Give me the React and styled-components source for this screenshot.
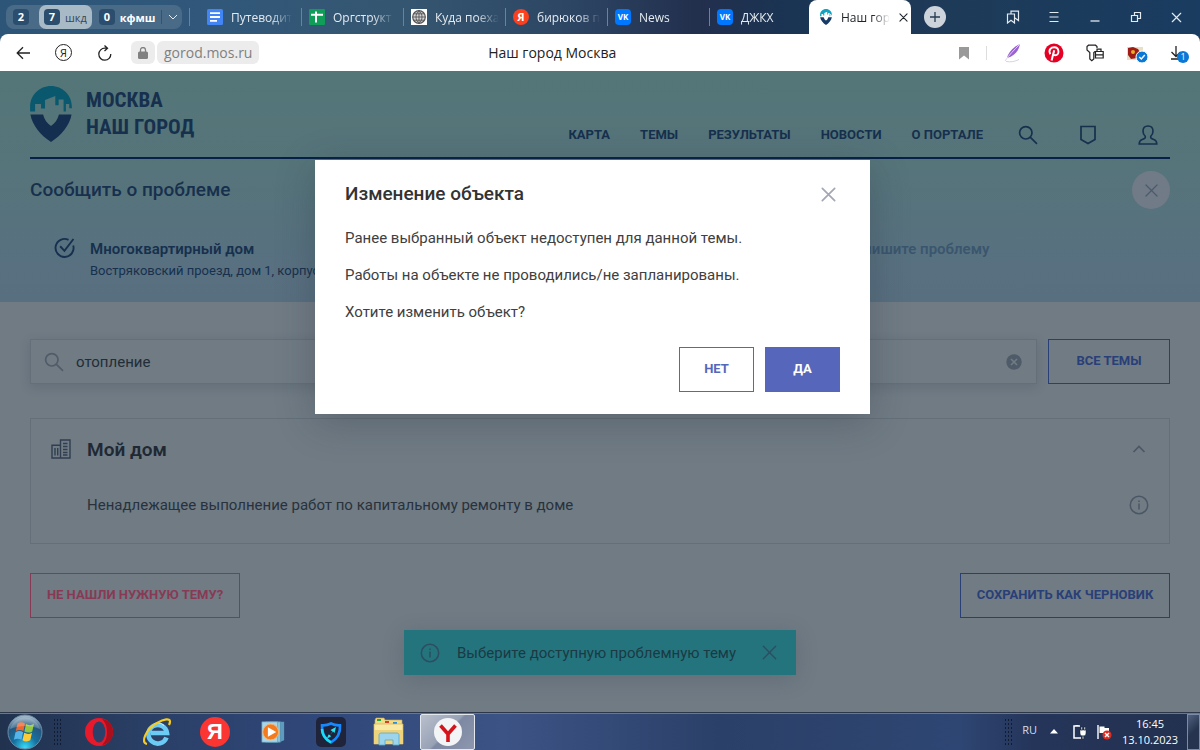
import React, { useState } from "react";
import styled, { createGlobalStyle, css } from "styled-components";

const GlobalStyle = createGlobalStyle`
  * {
    box-sizing: border-box;
  }

  body {
    margin: 0;
    font-family: Roboto, "Noto Sans", sans-serif;
    color: #1d2733;
  }

  button, input {
    font-family: inherit;
  }

  h1, h2, h3, p {
    margin: 0;
  }
`;

const uiFont = css`
  font-family: "Open Sans", "Noto Sans", sans-serif;
`;

const resetButton = css`
  display: flex;
  align-items: center;
  justify-content: center;
  padding: 0;
  border: none;
  background: none;
  color: inherit;
  cursor: pointer;
`;

const Screen = styled.div`
  display: flex;
  flex-direction: column;
  min-height: 100vh;
`;

/* ---------- browser ---------- */

const TabStrip = styled.div`
  ${uiFont}
  display: flex;
  align-items: center;
  height: 34px;
  padding-left: 6px;
  color: #e3eaf0;
  font-size: 12px;
  background: linear-gradient(
    90deg,
    #2c5577 0%,
    #31587a 18%,
    #355670 34%,
    #2c4563 48%,
    #222f4d 58%,
    #1a3453 66%,
    #1e3a58 78%,
    #193c60 100%
  );
`;

const Groups = styled.div`
  display: flex;
  align-items: center;
  height: 24px;
  width: 176px;
  margin-right: 15px;
  border-radius: 8px;
  background: #4a6b88;
  position: relative;

  &::after {
    content: "";
    position: absolute;
    right: -8px;
    top: 3px;
    width: 1px;
    height: 18px;
    background: #6c8299;
  }
`;

const Group = styled.button`
  ${resetButton}
  gap: 5px;
  height: 24px;
  padding: 0 5px;
  border-radius: 7px;
  font-size: 11px;
  font-weight: ${({ $active }) => ($active ? 400 : 700)};
  color: ${({ $active }) => ($active ? "#33475a" : "#ffffff")};
  background: ${({ $active }) => ($active ? "#a9bac7" : "transparent")};
  margin-left: ${({ $active }) => ($active ? "5px" : "2px")};
`;

const Count = styled.span`
  width: 16px;
  height: 16px;
  border-radius: 4px;
  background: #2b4e6e;
  color: #ffffff;
  font-size: 11px;
  font-weight: 700;
  line-height: 16px;
  text-align: center;
`;

const GroupToggle = styled.button`
  ${resetButton}
  height: 14px;
  margin-left: auto;
  padding: 0 6px;
  border-left: 1px solid #33546f;
`;

const Tab = styled.button`
  ${resetButton}
  position: relative;
  justify-content: flex-start;
  gap: 8px;
  width: 102px;
  height: 34px;
  padding: 0 7px 0 10px;
  font-size: 12px;
  color: ${({ $active }) => ($active ? "#20252b" : "inherit")};
  background: ${({ $active }) => ($active ? "#ffffff" : "none")};
  border-radius: ${({ $active }) => ($active ? "8px 8px 0 0" : "0")};

  & + &::before {
    content: "";
    display: ${({ $active }) => ($active ? "none" : "block")};
    position: absolute;
    left: 2px;
    top: 8px;
    width: 1px;
    height: 18px;
    background: #6c8299;
  }

  svg {
    flex: none;
  }
`;

const TabText = styled.span`
  flex: 1;
  text-align: left;
  white-space: nowrap;
  mask-image: linear-gradient(90deg, #000 65%, transparent 100%);
`;

const Favicon = styled.span`
  flex: none;
  width: 16px;
  height: 16px;
  border-radius: ${({ $round }) => ($round ? "50%" : "4px")};
  background: ${({ $color }) => $color};
  color: #ffffff;
  font-size: ${({ $small }) => ($small ? "8px" : "11px")};
  font-weight: 700;
  line-height: 16px;
  text-align: center;
`;

const NewTab = styled.button`
  ${resetButton}
  width: 22px;
  height: 22px;
  margin-left: 13px;
  border-radius: 50%;
  background: #cdd4dc;
  color: #263a50;
`;

const WindowButtons = styled.div`
  display: flex;
  margin-left: auto;
  padding-right: 3px;
`;

const IconButton = styled.button`
  ${resetButton}
  width: 41px;
  height: 30px;
`;

const Toolbar = styled.div`
  ${uiFont}
  display: flex;
  align-items: center;
  height: 37px;
  padding: 0 3px 0 2px;
  color: #222222;
  background: #ffffff;
  border-radius: 8px 8px 0 0;
`;

const ToolbarWrap = styled.div`
  background: linear-gradient(90deg, #2c5577, #193c60);
`;

const Address = styled.div`
  display: flex;
  gap: 2px;
  margin-left: 6px;
`;

const AddressChip = styled.span`
  display: flex;
  align-items: center;
  height: 23px;
  padding: 0 7px;
  border-radius: 6px;
  background: #ececec;
  color: #808080;
  font-size: 14px;
`;

const PageTitle = styled.span`
  flex: 1;
  padding-right: 98px;
  font-size: 14px;
  text-align: center;
`;

const YaRing = styled.span`
  width: 17px;
  height: 17px;
  border: 1px solid #222222;
  border-radius: 50%;
  font-size: 11px;
  line-height: 15px;
`;

const DownloadMark = styled.span`
  position: relative;
  display: flex;
  padding-left: 1px;
`;

const DownloadCount = styled.span`
  position: absolute;
  top: 5px;
  left: 8px;
  width: 12px;
  height: 12px;
  border-radius: 50%;
  background: #0a78d6;
  color: #ffffff;
  font-size: 9px;
  line-height: 12px;
  text-align: center;
`;

const Extensions = styled.div`
  display: flex;
  align-items: center;
`;

const BarDivider = styled.span`
  width: 1px;
  height: 14px;
  margin: 0 5px 0 2px;
  background: #dddddd;
`;

/* ---------- site ---------- */

const Site = styled.div`
  position: relative;
  flex: 1;
  background: #707b84;
`;

const Hero = styled.div`
  padding: 0 30px;
  height: 231px;
  color: #16304e;
  background: linear-gradient(180deg, #547678 0%, #56747b 45%, #587080 85%, #586f7f 100%);
`;

const SiteHeader = styled.header`
  display: flex;
  align-items: flex-end;
  justify-content: space-between;
  height: 88px;
  padding-bottom: 9px;
  border-bottom: 2px solid #06214a;
`;

const Logo = styled.a`
  display: flex;
  gap: 14px;
  align-self: flex-start;
  padding-top: 15px;
  color: inherit;
  text-decoration: none;
`;

const LogoText = styled.span`
  padding-top: 1px;
  font-family: "Roboto Condensed", "Liberation Sans Narrow", Roboto, sans-serif;
  font-size: 21px;
  font-weight: 700;
  line-height: 27px;
  white-space: nowrap;
`;

const Nav = styled.nav`
  display: flex;
  align-items: center;
  gap: 30px;
`;

const NavLink = styled.a`
  color: inherit;
  font-size: 13px;
  font-weight: 700;
  line-height: 26px;
  text-decoration: none;
  text-transform: uppercase;
`;

const NavIcons = styled.div`
  display: flex;
  gap: 16px;
  margin-left: -7px;
`;

const NavIcon = styled.a`
  display: flex;
  align-items: center;
  justify-content: center;
  width: 44px;
  height: 26px;
  color: inherit;
`;

const TitleRow = styled.div`
  display: flex;
  align-items: center;
  justify-content: space-between;
  padding-top: 12px;
`;

const Title = styled.h1`
  font-size: 19px;
  font-weight: 500;
  line-height: 24px;
`;

const RoundClose = styled.button`
  ${resetButton}
  width: 38px;
  height: 38px;
  border-radius: 50%;
  background: #717b88;
  color: #4d5a6b;
`;

const Steps = styled.div`
  display: grid;
  grid-template-columns: 1fr 1fr 353px;
  padding: 28px 0 0 24px;
`;

const Step = styled.div`
  display: flex;
  gap: 14px;
  grid-column: ${({ $column }) => $column};
  color: ${({ $muted }) => ($muted ? "#3a566e" : "inherit")};

  svg {
    flex: none;
  }
`;

const StepTitle = styled.div`
  font-size: 15px;
  font-weight: 600;
  line-height: 24px;
`;

const StepText = styled.div`
  font-size: 13px;
  line-height: 20px;
  white-space: nowrap;
`;

const Content = styled.main`
  padding: 37px 30px 94px;
`;

const SearchRow = styled.div`
  display: flex;
  gap: 11px;
`;

const SearchField = styled.label`
  display: flex;
  flex: 1;
  align-items: center;
  height: 45px;
  padding: 0 2px 0 13px;
  border: 1px solid #646f79;
  box-shadow: 0 3px 10px rgba(50, 62, 75, 0.2);
  color: #505c69;
`;

const SearchInput = styled.input`
  flex: 1;
  min-width: 0;
  margin-left: 12px;
  padding: 0;
  border: none;
  outline: none;
  background: none;
  color: #222d38;
  font-size: 15px;
`;

const Button = styled.button`
  height: 45px;
  min-width: ${({ $width }) => $width}px;
  padding: 0 0 2px;
  border: 1px solid ${({ $color }) => $color};
  background: ${({ $filled, $color }) => ($filled ? $color : "transparent")};
  color: ${({ $filled, $color }) => ($filled ? "#ffffff" : $color)};
  font-size: 13px;
  font-weight: 700;
  line-height: 20px;
  text-transform: uppercase;
  cursor: pointer;
`;

const Card = styled.section`
  margin-top: 34px;
  padding: 12px 12px 0 20px;
  border: 1px solid #646f79;
  color: #1f2934;
`;

const CardRow = styled.div`
  display: flex;
  align-items: center;
  gap: 16px;
  height: ${({ $height }) => $height}px;
  padding-left: ${({ $indent }) => ($indent ? "36px" : "0")};
`;

const CardTitle = styled.h2`
  flex: 1;
  font-size: 19px;
  font-weight: 600;
`;

const CardText = styled.p`
  flex: 1;
  color: #28323d;
  font-size: 15px;
`;

const SmallButton = styled.button`
  ${resetButton}
  width: 36px;
  height: 36px;
  color: #4b5766;
`;

const Actions = styled.div`
  display: flex;
  justify-content: space-between;
  margin-top: 29px;
`;

const Overlay = styled.div`
  position: absolute;
  inset: 0;
  display: flex;
  align-items: flex-start;
  justify-content: center;
  padding: 89px 15px 0 0;
`;

const Dialog = styled.div`
  width: 555px;
  padding: 22px 30px;
  background: #ffffff;
  box-shadow: 0 8px 36px rgba(40, 50, 62, 0.3);
  color: #333333;
`;

const DialogHead = styled.div`
  display: flex;
  justify-content: space-between;
  margin-bottom: 20px;
`;

const DialogTitle = styled.h2`
  font-size: 19px;
  font-weight: 500;
  line-height: 24px;
`;

const CloseButton = styled.button`
  ${resetButton}
  width: 24px;
  height: 24px;
  color: ${({ $color }) => $color};
`;

const DialogBody = styled.div`
  display: grid;
  gap: 13px;
  color: #404040;
  font-size: 15px;
  line-height: 24px;
`;

const DialogActions = styled.div`
  display: flex;
  justify-content: flex-end;
  gap: 11px;
  margin-top: 23px;
`;

const Toast = styled.div`
  position: absolute;
  bottom: 37px;
  left: 50%;
  display: flex;
  align-items: center;
  width: 392px;
  height: 45px;
  padding: 0 15px 0 16px;
  margin-left: -196px;
  background: #24747e;
  box-shadow: 0 4px 22px rgba(45, 56, 70, 0.2);
  color: #2d4e60;
`;

const ToastText = styled.p`
  flex: 1;
  margin-left: 17px;
  color: #1b3a44;
  font-size: 15px;
`;

/* ---------- taskbar ---------- */

const Taskbar = styled.footer`
  ${uiFont}
  display: flex;
  align-items: center;
  height: 38px;
  border-top: 1px solid #2c3849;
  box-shadow: inset 0 1px 0 #66789a;
  color: #ffffff;
  background: linear-gradient(90deg, #21324f 0%, #2a3f65 12%, #30477a 27%, #3c5385 42%, #2b4068 60%, #2e4673 80%, #25355a 86%, #23314f 100%);
`;

const StartButton = styled.button`
  ${resetButton}
  width: 50px;
  height: 36px;
`;

const Grip = styled.span`
  width: 9px;
  height: 28px;
  margin: 0 3px;
  background-image: radial-gradient(#111c30 1px, transparent 1px);
  background-size: 3px 4px;
`;

const AppGroup = styled.div`
  display: flex;
  align-items: center;
  margin-left: 5px;
`;

const AppButton = styled.button`
  ${resetButton}
  width: ${({ $active }) => ($active ? "55px" : "58px")};
  height: 36px;
  margin-left: ${({ $active }) => ($active ? "2px" : "0")};
  border: ${({ $active }) => ($active ? "1px solid #e3e7ee" : "none")};
  border-radius: 2px;
  background: ${({ $active }) =>
    $active ? "linear-gradient(135deg, #b9c0cd 0%, #98a2b6 48%, #7d88a2 52%, #8d97ae 100%)" : "none"};
`;

const YaApp = styled.span`
  width: 30px;
  height: 30px;
  border-radius: 50%;
  background: #fb3531;
  color: #ffffff;
  font-family: "Liberation Sans", sans-serif;
  font-size: 22px;
  font-weight: 700;
  line-height: 30px;
  text-align: center;
`;

const Tray = styled.div`
  display: flex;
  align-items: center;
  margin-left: auto;
`;

const TrayIcons = styled.div`
  display: flex;
  align-items: center;
  gap: 14px;
  width: 64px;

  svg + svg + svg {
    margin-left: -6px;
  }
`;

const Lang = styled.span`
  margin: 0 13px 4px 6px;
  font-size: 11px;
  color: #d8deea;
`;

const Clock = styled.div`
  width: 72px;
  margin-right: 1px;
  font-size: 11px;
  line-height: 16px;
  text-align: center;
`;

const ShowDesktop = styled.button`
  width: 13px;
  height: 36px;
  padding: 0;
  border: 1px solid #7c8ba6;
  background: linear-gradient(135deg, #52617e, #26344f 50%);
`;

/* ---------- icons ---------- */

function Icon({ size = 20, box = 20, stroke = 1.5, children }) {
  return (
    <svg
      width={size}
      height={size}
      viewBox={`0 0 ${box} ${box}`}
      fill="none"
      stroke="currentColor"
      strokeWidth={stroke}
      aria-hidden="true"
    >
      {children}
    </svg>
  );
}

const Cross = ({ size = 20, stroke = 1.5 }) => (
  <Icon size={size} stroke={stroke}>
    <path d="M3.5 3.5l13 13M16.5 3.5l-13 13" strokeLinecap="round" />
  </Icon>
);

const SearchIcon = ({ size = 22 }) => (
  <Icon size={size} stroke={1.7}>
    <circle cx="7.8" cy="7.8" r="6.2" />
    <path d="M12.4 12.4l6.1 6" strokeLinecap="round" />
  </Icon>
);

const InfoIcon = () => (
  <Icon>
    <circle cx="10" cy="10" r="8.7" />
    <path d="M10 8.6v6M10 5.4v1.6" />
  </Icon>
);

const CheckIcon = () => (
  <Icon size={22} stroke={1.7}>
    <path d="M13.2 2.6a8.200 8.200 0 1 0 4.300 5.200M5.600 8.400l3.900 4.200L17.700 1.800" />
  </Icon>
);

function PinLogo({ width, height, top = "#09586d", bottom = "#132e4e" }) {
  return (
    <svg width={width} height={height} viewBox="0 0 126 169" aria-hidden="true">
      <path
        fill={top}
        d="M0 77V63C0 27 28 0 63 0s63 27 63 63v4h-8V54h-10v23h-7V41H86v17H76V30L45 42v26H33V54H15v23z"
      />
      <path fill={bottom} d="M1 86h38c4 15 12 27 24 35 12-8 20-20 24-35h38c-5 32-31 63-62 83C32 149 6 118 1 86z" />
    </svg>
  );
}

const DocIcon = () => (
  <svg width="16" height="16" viewBox="0 0 16 16">
    <rect width="16" height="16" rx="1.5" fill="#4285f4" />
    <path d="M3 4.2h10M3 8h10M3 11.8h7" stroke="#fff" strokeWidth="1.8" />
  </svg>
);

const SheetIcon = () => (
  <svg width="16" height="16" viewBox="0 0 16 16">
    <rect width="16" height="16" rx="1" fill="#0f9d58" />
    <path d="M2 5.8h12M7 2.5v11" stroke="#fff" strokeWidth="2" />
  </svg>
);

const GlobeIcon = () => (
  <svg width="16" height="16" viewBox="0 0 16 16" fill="none">
    <rect width="16" height="16" fill="#fff" />
    <circle cx="8" cy="8" r="6.3" fill="#d5d5d5" stroke="#555" strokeWidth="1.2" />
    <path
      d="M8 1.7v12.6M1.7 8h12.6M2.8 4.8h10.4M2.8 11.2h10.4M8 1.7c-4 3-4 9.6 0 12.6M8 1.7c4 3 4 9.6 0 12.6"
      stroke="#555"
      strokeWidth=".9"
    />
  </svg>
);

const HomeIcon = () => (
  <svg width="20" height="20" viewBox="0 0 20 20" fill="none" stroke="#303e50" strokeWidth="1.4">
    <path d="M1 6.2h8.5V19H1zM9.5 1H19v18H9.5z" />
    <path d="M4 9v7.5M6.7 9v7.500M12 4.500h4.500M12 7.500h4.500M12 10.500h4.500M12 13.500h4.500M12 16h4.500" />
  </svg>
);

const OrbIcon = () => (
  <svg width="36" height="36" viewBox="0 0 36 36">
    <defs>
      <radialGradient id="orb" cx="50%" cy="95%" r="90%">
        <stop offset="0" stopColor="#35dcfa" />
        <stop offset=".4" stopColor="#16709f" />
        <stop offset=".75" stopColor="#24567e" />
        <stop offset="1" stopColor="#9cb4c6" />
      </radialGradient>
    </defs>
    <circle cx="18" cy="18" r="17" fill="url(#orb)" stroke="#6b8ba6" />
    <path d="M10.5 9.5c2.5-1.8 5-1.5 7.5 0l-1.6 7.5c-2.4-1.4-5-1.5-7.6 0z" fill="#f0652c" />
    <path d="M19 10c2.6 1.5 5.2 1.6 8-.2l-1.8 7.6c-2.5 1.6-5.2 1.5-7.8 0z" fill="#93c83e" />
    <path d="M8.5 18.2c2.5-1.5 5.2-1.4 7.6 0l-1.7 7.5c-2.4-1.3-5-1.4-7.5 0z" fill="#55b5ea" />
    <path d="M17.2 18.8c2.6 1.5 5.2 1.5 7.8-.1l-1.7 7.6c-2.6 1.5-5.2 1.5-7.8-.1z" fill="#fccb3a" />
    <path d="M3 15a15.5 15.5 0 0 1 30 0c-10-4-20-4-30 0z" fill="#fff" opacity=".22" />
  </svg>
);

const OperaIcon = () => (
  <svg width="30" height="30" viewBox="0 0 30 30">
    <circle cx="15" cy="15" r="14" fill="#e8192a" />
    <path d="M18 2c7 1 11 6 11 13s-4 12-11 13c4-4 5-8 5-13s-1-9-5-13z" fill="#a90f1c" />
    <ellipse cx="15" cy="15" rx="6.3" ry="10.5" fill="#2b4169" />
  </svg>
);

const ExplorerIcon = () => (
  <svg width="30" height="30" viewBox="0 0 30 30" fill="none">
    <path d="M24.5 20.500A9.300 9.300 0 1 1 25 16H9" stroke="#6bcbf5" strokeWidth="4.600" />
    <path d="M22 8.5c-4-4-10-3-12 2" stroke="#b8ebff" strokeWidth="1.2" />
    <path d="M5 27C-2 26 4 12 15 6 22 2 28 1 28 4.5c0 1.2-.5 2.5-1 3.5" stroke="#f6cb25" strokeWidth="2.2" />
  </svg>
);

const PlayerIcon = () => (
  <svg width="26" height="26" viewBox="0 0 28 28">
    <path d="M9 3h17v20l-5 2H9z" fill="#5d9cbc" />
    <path d="M6 3h16v22H6z" fill="#8fc7de" stroke="#4887a8" strokeWidth=".7" />
    <path d="M2 3h17v22H2z" fill="#a9d7e8" stroke="#5b98b5" strokeWidth=".7" />
    <circle cx="11.5" cy="14" r="8.5" fill="#f27a1f" stroke="#ffb36b" />
    <path d="M8.5 9v10l9-5z" fill="#fff" />
  </svg>
);

const ShieldIcon = () => (
  <svg width="30" height="30" viewBox="0 0 30 30">
    <rect width="30" height="30" rx="5" fill="#20243a" />
    <path
      d="M15 6.5c3 1.5 6 2 9 1.8.5 7-2 13-9 17-7-4-9.5-10-9-17 3 .2 6-.3 9-1.8z"
      fill="none"
      stroke="#1789ff"
      strokeWidth="2.6"
    />
    <path d="M6 12c0 6 3 10 9 13.5" fill="none" stroke="#16e0f5" strokeWidth="2.6" />
    <path d="M20 10l-1.5 6-1.5-1.5-3 3.5 1 1.500-4 2 1.500-4 1.500.5 2.500-3.500-2-1.500z" fill="#25e4f2" />
  </svg>
);

const FolderIcon = () => (
  <svg width="32" height="30" viewBox="0 0 32 30">
    <path d="M2 3l1-2h8l1 2h17v10H2z" fill="#f2dc86" stroke="#c9a94b" strokeWidth=".6" />
    <path d="M4 2h4v2H4z" fill="#25a645" />
    <path d="M12 4h4v2h-4z" fill="#d3402c" />
    <path d="M20 5h4v2h-4z" fill="#2b8fd8" />
    <path d="M1 7h29v20H1z" fill="#f8e9a4" stroke="#d2b65e" strokeWidth=".7" />
    <path d="M1 13h29v14H1z" fill="#ecd37c" />
    <path d="M6 28V18c0-1 .7-2 2-2h16c1.3 0 2 1 2 2v10h-6v-5h-8v5z" fill="#9bd4ec" stroke="#5aa8cc" strokeWidth=".8" />
  </svg>
);

const YBrowserIcon = () => (
  <svg width="30" height="30" viewBox="0 0 30 30">
    <circle cx="15" cy="15" r="14" fill="#f3f4f6" />
    <path d="M7.500 8.500L15 17l7.500-8.500M15 16v9" fill="none" stroke="#d4131b" strokeWidth="3.600" />
  </svg>
);

const tabs = [
  { title: "Путеводит", icon: <DocIcon /> },
  { title: "Оргструкт", icon: <SheetIcon /> },
  { title: "Куда поеха", icon: <GlobeIcon /> },
  { title: "бирюков п", icon: <Favicon $round $color="#fc3f1d">Я</Favicon> },
  { title: "News", icon: <Favicon $small $color="#0077ff">VK</Favicon> },
  { title: "ДЖКХ", icon: <Favicon $small $color="#0077ff">VK</Favicon> },
];

const navItems = ["Карта", "Темы", "Результаты", "Новости", "О портале"];

function BrowserTabs() {
  return (
    <TabStrip>
      <Groups>
        <Group><Count>2</Count></Group>
        <Group $active><Count>7</Count>шкд</Group>
        <Group><Count>0</Count>кфмш</Group>
        <GroupToggle aria-label="Группы">
          <Icon size={10} box={10} stroke={1}><path d="M1 3l4 4 4-4" /></Icon>
        </GroupToggle>
      </Groups>
      {tabs.map((tab) => (
        <Tab key={tab.title}>
          {tab.icon}
          <TabText>{tab.title}</TabText>
        </Tab>
      ))}
      <Tab $active>
        <PinLogo width={14} height={16} top="#12a3c0" bottom="#173a66" />
        <TabText>Наш гор</TabText>
        <Cross size={11} stroke={2} />
      </Tab>
      <NewTab aria-label="Новая вкладка">
        <Icon size={12} box={12} stroke={1.3}><path d="M6 1v10M1 6h10" /></Icon>
      </NewTab>
      <WindowButtons>
        <IconButton aria-label="Закладки">
          <Icon size={14} box={14} stroke={1.2}>
            <path d="M1.5 4h7v9L5 10.3 1.5 13zM5 4V1.200h7.500v9.300L9 8" />
          </Icon>
        </IconButton>
        <IconButton aria-label="Меню">
          <Icon size={12} box={12} stroke={1.2}><path d="M1.5 1.5h9M1.5 6h9M1.5 10.5h9" /></Icon>
        </IconButton>
        <IconButton aria-label="Свернуть">
          <Icon size={12} box={12} stroke={1.3}><path d="M1.5 10h9" /></Icon>
        </IconButton>
        <IconButton aria-label="Развернуть">
          <Icon size={12} box={12} stroke={1.2}><path d="M1.500 4.500h6v6h-6zM4.500 4.500v-3h6v6h-3" /></Icon>
        </IconButton>
        <IconButton aria-label="Закрыть окно"><Cross size={13} stroke={1.8} /></IconButton>
      </WindowButtons>
    </TabStrip>
  );
}

function BrowserToolbar() {
  return (
    <ToolbarWrap>
      <Toolbar>
        <IconButton aria-label="Назад">
          <Icon size={14} box={14} stroke={1.3}><path d="M14 7H1M7 1.2L1.200 7 7 12.800" /></Icon>
        </IconButton>
        <IconButton aria-label="Яндекс"><YaRing>Я</YaRing></IconButton>
        <IconButton aria-label="Обновить">
          <Icon size={16} box={16} stroke={1.3}>
            <path d="M13.800 9A6 6 0 1 1 8 3.200h2.500M7.500.5l3 2.700-3 2.800" />
          </Icon>
        </IconButton>
        <Address>
          <AddressChip>
            <svg width="10" height="12" viewBox="0 0 10 12">
              <rect y="4.500" width="10" height="7.500" rx="1.500" fill="#808080" />
              <path d="M2.500 5V3a2.500 2.500 0 0 1 5 0v2" fill="none" stroke="#808080" strokeWidth="1.300" />
            </svg>
          </AddressChip>
          <AddressChip>gorod.mos.ru</AddressChip>
        </Address>
        <PageTitle>Наш город Москва</PageTitle>
        <Extensions>
          <IconButton aria-label="В закладки">
            <svg width="10" height="14" viewBox="0 0 10 14"><path d="M0 1h10v12.500L5 9.500l-5 4z" fill="#999" /></svg>
          </IconButton>
          <BarDivider />
          <IconButton aria-label="Перо">
            <svg width="18" height="20" viewBox="0 0 18 20">
              <path d="M3 15C4 10 9 4 16 1c-1 6-5 12-13 14z" fill="#9a63cf" />
              <path d="M1 18C5 12 10 7 16 1" stroke="#e3cdf5" fill="none" />
              <path d="M2 18.500c5 .8 9 0 13-2" stroke="#d5d5dd" fill="none" />
            </svg>
          </IconButton>
          <IconButton aria-label="Pinterest">
            <svg width="20" height="20" viewBox="0 0 20 20" fill="none" stroke="#fff">
              <circle cx="10" cy="10" r="9.500" fill="#e60023" stroke="none" />
              <path d="M6.300 11.200C4 7 7 4.300 10.300 4.300c5.200 0 5.500 8 1 8-1.200 0-2-.7-2.200-1.300" strokeWidth="1.900" />
              <path d="M10.200 7.300L7.600 17.500" strokeWidth="2" />
            </svg>
          </IconButton>
          <IconButton aria-label="Пароли">
            <Icon size={18} box={18} stroke={1.2}>
              <path d="M9.500 7.200L7.800 8.500V15l-2 1.800L3.800 15V8.500L1 6V2.500L2.500 1.200h7L11 2.500V4M8.500 7.500h8.700v6.500H9.500V7.500M11 7.300V5.200h4v2.100M9.500 10.800h7.700" />
            </Icon>
          </IconButton>
          <IconButton aria-label="Профиль">
            <svg width="24" height="20" viewBox="0 0 24 20">
              <path d="M3 4h16v13H3z" fill="#e8dfc4" />
              <path d="M4 5l5-1 5 2 3 5-4 4-6 1-3-4z" fill="#9d1d16" />
              <circle cx="9" cy="9" r="2" fill="#e9ac22" />
              <circle cx="18" cy="14" r="6" fill="#0a78d6" stroke="#fff" />
              <path d="M15.300 14l2 2 3.500-4" fill="none" stroke="#fff" strokeWidth="1.400" />
            </svg>
          </IconButton>
          <IconButton aria-label="Загрузки">
            <DownloadMark>
              <Icon size={14} box={14} stroke={1.3}><path d="M6 0v10M1.500 6L6 10.500 10.500 6M1 13h11" /></Icon>
              <DownloadCount>1</DownloadCount>
            </DownloadMark>
          </IconButton>
        </Extensions>
      </Toolbar>
    </ToolbarWrap>
  );
}

function SiteHero() {
  return (
    <Hero>
      <SiteHeader>
        <Logo href="#">
          <PinLogo width={42} height={56} />
          <LogoText>МОСКВА<br />НАШ ГОРОД</LogoText>
        </Logo>
        <Nav>
          {navItems.map((item) => (
            <NavLink key={item} href="#">{item}</NavLink>
          ))}
          <NavIcons>
            <NavIcon href="#" aria-label="Поиск"><SearchIcon size={20} /></NavIcon>
            <NavIcon href="#" aria-label="Рейтинг">
              <Icon><path d="M3 1.500h14v13L10 18.500l-7-4z" strokeWidth="1.700" /></Icon>
            </NavIcon>
            <NavIcon href="#" aria-label="Кабинет">
              <Icon stroke={1.6}>
                <path d="M10 1C6.800 1 5 3.300 5 6.200c0 2.300 1 3.800 2.200 5 .6 1.800-.3 2.300-3 3.200C2 15.100 1.200 16.300 1.200 19h17.600c0-2.700-.8-3.900-3-4.600-2.700-.9-3.600-1.400-3-3.200C14 10 15 8.500 15 6.200 15 3.300 13.200 1 10 1z" />
              </Icon>
            </NavIcon>
          </NavIcons>
        </Nav>
      </SiteHeader>
      <TitleRow>
        <Title>Сообщить о проблеме</Title>
        <RoundClose aria-label="Закрыть форму"><Cross size={17} /></RoundClose>
      </TitleRow>
      <Steps>
        <Step $column={1}>
          <CheckIcon />
          <div>
            <StepTitle>Многоквартирный дом</StepTitle>
            <StepText>Востряковский проезд, дом 1, корпус</StepText>
          </div>
        </Step>
        <Step $column={3} $muted>
          <CheckIcon />
          <StepTitle>Опишите проблему</StepTitle>
        </Step>
      </Steps>
    </Hero>
  );
}

function ThemeSearch() {
  const [query, setQuery] = useState("отопление");

  return (
    <Content>
      <SearchRow>
        <SearchField htmlFor="theme">
          <SearchIcon size={20} />
          <SearchInput
            id="theme"
            type="text"
            aria-label="Поиск темы"
            value={query}
            onChange={(e) => setQuery(e.target.value)}
          />
          <IconButton aria-label="Очистить" onClick={() => setQuery("")}>
            <svg width="16" height="16" viewBox="0 0 16 16">
              <circle cx="8" cy="8" r="7.700" fill="#4f5b68" />
              <path d="M5 5l6 6M11 5l-6 6" stroke="#707b84" strokeWidth="1.700" />
            </svg>
          </IconButton>
        </SearchField>
        <Button $width={122} $color="#293f78">Все темы</Button>
      </SearchRow>
      <Card>
        <CardRow $height={36}>
          <HomeIcon />
          <CardTitle>Мой дом</CardTitle>
          <SmallButton aria-label="Свернуть раздел">
            <Icon size={14} box={14} stroke={1.7}><path d="M1.500 10L7 4.500l5.500 5.500" /></Icon>
          </SmallButton>
        </CardRow>
        <CardRow $height={76} $indent>
          <CardText>Ненадлежащее выполнение работ по капитальному ремонту в доме</CardText>
          <SmallButton aria-label="Подробнее"><InfoIcon /></SmallButton>
        </CardRow>
      </Card>
      <Actions>
        <Button $width={210} $color="#883a54">Не нашли нужную тему?</Button>
        <Button $width={210} $color="#293f78">Сохранить как черновик</Button>
      </Actions>
    </Content>
  );
}

function ChangeDialog() {
  return (
    <Overlay>
      <Dialog role="dialog" aria-labelledby="dialog-title">
        <DialogHead>
          <DialogTitle id="dialog-title">Изменение объекта</DialogTitle>
          <CloseButton $color="#a3a7b5" aria-label="Закрыть"><Cross size={19} stroke={1.8} /></CloseButton>
        </DialogHead>
        <DialogBody>
          <p>Ранее выбранный объект недоступен для данной темы.</p>
          <p>Работы на объекте не проводились/не запланированы.</p>
          <p>Хотите изменить объект?</p>
        </DialogBody>
        <DialogActions>
          <Button $width={75} $color="#5667bb">Нет</Button>
          <Button $width={75} $color="#5667bb" $filled>Да</Button>
        </DialogActions>
      </Dialog>
    </Overlay>
  );
}

function SystemTaskbar() {
  return (
    <Taskbar>
      <StartButton aria-label="Пуск"><OrbIcon /></StartButton>
      <Grip />
      <AppGroup>
        <AppButton aria-label="Opera"><OperaIcon /></AppButton>
        <AppButton aria-label="Internet Explorer"><ExplorerIcon /></AppButton>
        <AppButton><YaApp>Я</YaApp></AppButton>
        <AppButton aria-label="Проигрыватель"><PlayerIcon /></AppButton>
        <AppButton aria-label="Защита"><ShieldIcon /></AppButton>
        <AppButton aria-label="Проводник"><FolderIcon /></AppButton>
        <AppButton $active aria-label="Браузер"><YBrowserIcon /></AppButton>
      </AppGroup>
      <Tray>
        <Grip />
        <Lang>RU</Lang>
        <TrayIcons>
          <svg width="8" height="5" viewBox="0 0 8 5"><path d="M0 4.500h8L4 0z" fill="#fff" /></svg>
          <svg width="16" height="16" viewBox="0 0 16 16" fill="none">
            <path d="M8 2H2v12h7" stroke="#fff" strokeWidth="1.500" />
            <path d="M3.500 1h3v1h-3z" fill="#fff" />
            <path
              d="M8 6h6v3c0 2-1 3-3 3s-3-1-3-3zM9 3h1.300v3H9zM12 3h1.300v3H12zM10.300 12h1.400v3h-1.400z"
              fill="#fff"
              stroke="#1b2233"
              strokeWidth=".5"
            />
          </svg>
          <svg width="16" height="16" viewBox="0 0 16 16" fill="none">
            <path d="M2 1v14" stroke="#fff" strokeWidth="1.400" />
            <path d="M3.500 2.500h5V4H13v6.500H7.500V9h-4z" fill="#fff" />
            <circle cx="11" cy="11" r="4.500" fill="#dc2d22" />
            <path d="M9 9l4 4M13 9l-4 4" stroke="#fff" strokeWidth="1.400" />
          </svg>
        </TrayIcons>
        <Clock>16:45<br />13.10.2023</Clock>
        <ShowDesktop aria-label="Рабочий стол" />
      </Tray>
    </Taskbar>
  );
}

function App() {
  return (
    <Screen>
      <GlobalStyle />
      <BrowserTabs />
      <BrowserToolbar />
      <Site>
        <SiteHero />
        <ThemeSearch />
        <Toast role="status">
          <InfoIcon />
          <ToastText>Выберите доступную проблемную тему</ToastText>
          <CloseButton $color="inherit" aria-label="Скрыть"><Cross size={19} /></CloseButton>
        </Toast>
        <ChangeDialog />
      </Site>
      <SystemTaskbar />
    </Screen>
  );
}

export default App;
